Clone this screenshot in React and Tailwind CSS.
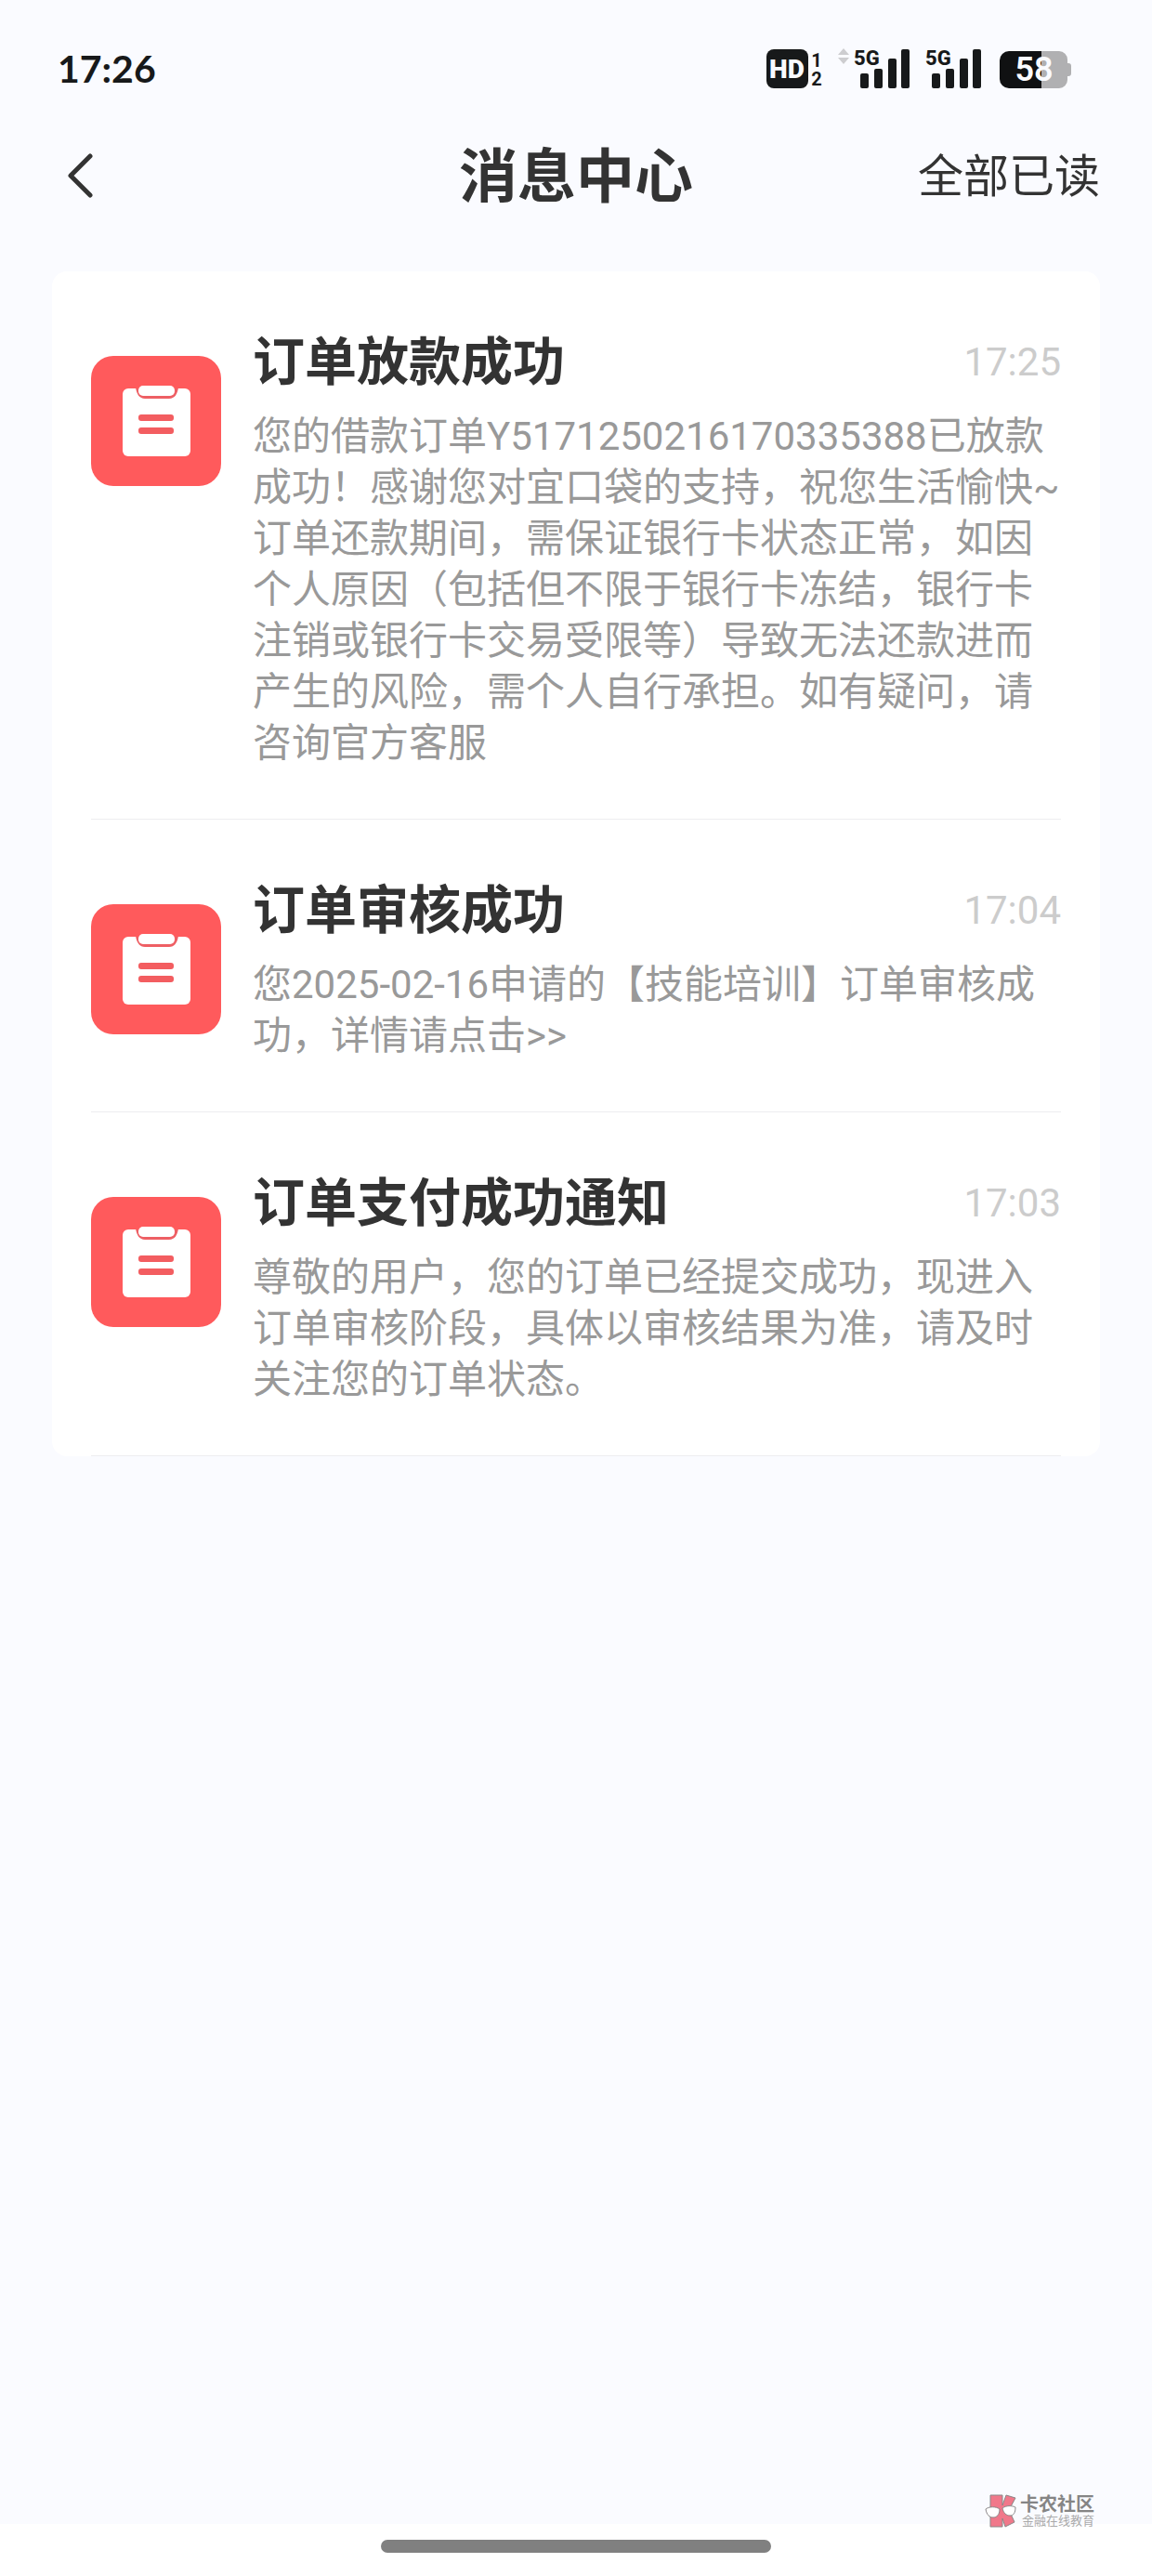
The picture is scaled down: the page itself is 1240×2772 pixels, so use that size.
import { useState } from "react";

const initialMessages = [
  {
    id: 1,
    title: "订单放款成功",
    time: "17:25",
    text: "您的借款订单Y5171250216170335388已放款成功！感谢您对宜口袋的支持，祝您生活愉快~订单还款期间，需保证银行卡状态正常，如因个人原因（包括但不限于银行卡冻结，银行卡注销或银行卡交易受限等）导致无法还款进而产生的风险，需个人自行承担。如有疑问，请咨询官方客服",
    read: false,
  },
  {
    id: 2,
    title: "订单审核成功",
    time: "17:04",
    text: "您2025-02-16申请的【技能培训】订单审核成功，详情请点击>>",
    read: false,
  },
  {
    id: 3,
    title: "订单支付成功通知",
    time: "17:03",
    text: "尊敬的用户，您的订单已经提交成功，现进入订单审核阶段，具体以审核结果为准，请及时关注您的订单状态。",
    read: false,
  },
];

const HdIcon = () => (
  <svg width="60" height="44" viewBox="0 0 60 44" className="font-['Roboto',sans-serif]" fill="#17191a">
    <rect x="0" y="1" width="45" height="42" rx="8" />
    <text x="22" y="32" textAnchor="middle" fontSize="28" fontWeight="900" fill="#fafbff">HD</text>
    <text x="54" y="20" textAnchor="middle" fontSize="20" fontWeight="700">1</text>
    <text x="54" y="40" textAnchor="middle" fontSize="20" fontWeight="700">2</text>
  </svg>
);

const SignalIcon = () => (
  <svg width="60" height="54" viewBox="0 -10 60 54" className="font-['Roboto',sans-serif]" fill="#17191a">
    <text x="0" y="18" fontSize="22" fontWeight="800">5G</text>
    <rect x="7" y="27" width="9" height="16" rx="2" />
    <rect x="22" y="22" width="9" height="21" rx="2" />
    <rect x="37" y="11" width="9" height="32" rx="2" />
    <rect x="51" y="1" width="9" height="42" rx="2" />
  </svg>
);

const ArrowsIcon = () => (
  <svg width="14" height="44" viewBox="0 0 14 44" fill="#cdcdd0">
    <path d="M7 0l6 7H1zM7 17l6-7H1z" />
  </svg>
);

const BatteryIcon = () => (
  <svg width="78" height="44" viewBox="0 0 78 44" className="font-['Roboto',sans-serif]">
    <path d="M45 3h19a9 9 0 0 1 9 9v4h1a3 3 0 0 1 3 3v8a3 3 0 0 1-3 3h-1v4a9 9 0 0 1-9 9H45z" fill="#b0b0b2" />
    <path d="M45 3H10A10 10 0 0 0 0 13v20a10 10 0 0 0 10 10h35z" fill="#101112" />
    <text x="37" y="35" textAnchor="middle" fontSize="36" fontWeight="600" fill="#fafbff">58</text>
  </svg>
);

const StatusBar = () => (
  <div className="flex h-24 items-end justify-between pl-[62px] pr-[86px]">
    <span className="font-['Lato',sans-serif] text-[41px] leading-[44px] font-bold text-[#17191a]">17:26</span>
    <div className="flex items-end">
      <HdIcon />
      <div className="ml-4 flex items-end">
        <ArrowsIcon />
        <div className="ml-1 flex gap-[17px]">
          <SignalIcon />
          <SignalIcon />
        </div>
      </div>
      <div className="ml-5">
        <BatteryIcon />
      </div>
    </div>
  </div>
);

const OrderIcon = () => (
  <svg viewBox="0 0 140 140" className="mt-[35px] size-[140px] shrink-0">
    <rect width="140" height="140" rx="24" fill="#ff5a5c" />
    <rect x="34" y="35" width="73" height="73" rx="6" fill="#fff" />
    <path d="M48 34h46c-1 7-4 12-10 12H58c-6 0-9-5-10-12z" fill="#ee5f64" />
    <path d="M47 30h48v5H47z" fill="#ff5a5c" />
    <rect x="51" y="32" width="39" height="11" rx="5" fill="#fff" />
    <rect x="51" y="63" width="38" height="7" rx="3" fill="#f35d60" />
    <rect x="51" y="77" width="38" height="7" rx="3" fill="#f35d60" />
  </svg>
);

const MessageItem = ({ message }) => (
  <li className="flex gap-[34px] border-b border-[#ededf0] pt-14 pb-[54px]">
    <OrderIcon />
    <div className="min-w-0 flex-1">
      <div className="flex items-center justify-between leading-[84px]">
        <h2 className="text-[56px] font-bold text-[#333]">{message.title}</h2>
        <time className="text-[42px] text-[#ccc]">{message.time}</time>
      </div>
      <p className="mt-[10px] text-[42px] leading-[55px] break-all text-[#999]">{message.text}</p>
    </div>
  </li>
);

const Watermark = () => (
  <div className="absolute right-[62px] bottom-[52px] flex items-center gap-1">
    <svg width="34" height="36" viewBox="0 0 34 36" stroke="#8a8788" strokeWidth="1" strokeLinejoin="round">
      <path d="M6 1h13v11l4-11 10 3-7 13 6 13-10 5-3-9v9H6z" fill="#f0788a" />
      <path d="M1 16c4-3 11-3 15 0 0 6-3 9-7 9s-7-3-8-9z" fill="#fff" />
      <path d="M19 15c4-3 10-3 14-1 0 6-2 9-6 9s-7-3-8-8z" fill="#fff" />
    </svg>
    <div className="flex flex-col items-end">
      <span className="text-[20px] leading-[21px] font-bold text-[#858585]">卡农社区</span>
      <span className="text-[13px] leading-[14px] text-[#aaa]">金融在线教育</span>
    </div>
  </div>
);

const App = () => {
  const [messages, setMessages] = useState(initialMessages);

  const handleReadAll = () => {
    setMessages((prev) => prev.map((m) => ({ ...m, read: true })));
  };

  return (
    <div
      lang="zh-CN"
      className="relative flex min-h-screen flex-col bg-[#fafbff] font-['Roboto','Noto_Sans_CJK_SC',sans-serif]"
    >
      <StatusBar />

      <header className="grid h-[186px] grid-cols-3 items-center px-14 text-[#333]">
        <button type="button" aria-label="返回" className="ml-4 justify-self-start">
          <svg width="28" height="48" viewBox="0 0 28 48" fill="none" stroke="#333" strokeWidth="5" strokeLinecap="round" strokeLinejoin="round">
            <path d="M25 3L4 24l21 21" />
          </svg>
        </button>
        <h1 className="justify-self-center pt-1 text-[63px] font-bold whitespace-nowrap">消息中心</h1>
        <button type="button" onClick={handleReadAll} className="justify-self-end pt-1 text-[49px]">
          全部已读
        </button>
      </header>

      <main className="flex-1 px-14 pt-[10px]">
        <ul className="rounded-2xl bg-white px-[42px]">
          {messages.map((message) => (
            <MessageItem key={message.id} message={message} />
          ))}
        </ul>
      </main>

      <footer className="flex h-14 justify-center bg-white pt-[17px]">
        <div className="h-[14px] w-[420px] rounded-full bg-[#808080]" />
      </footer>

      <Watermark />
    </div>
  );
};

export default App;
